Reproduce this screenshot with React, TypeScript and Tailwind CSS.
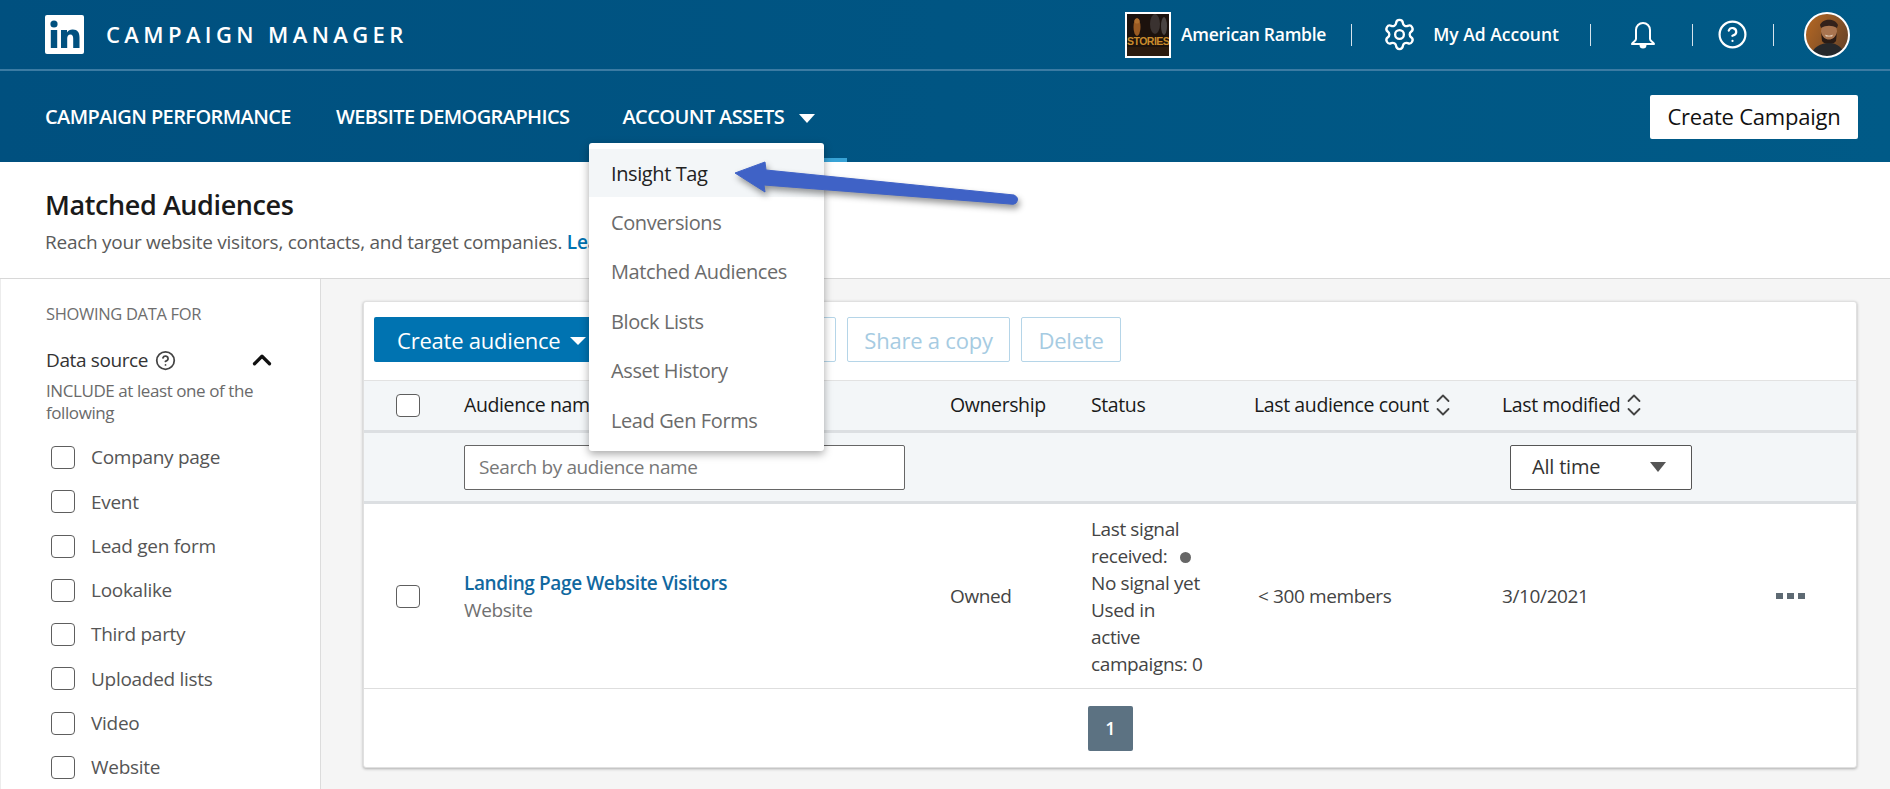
import { Settings, CircleHelp, ChevronUp } from "lucide-react";

const sources = ["Company page", "Event", "Lead gen form", "Lookalike", "Third party", "Uploaded lists", "Video", "Website"];
const menu = ["Insight Tag", "Conversions", "Matched Audiences", "Block Lists", "Asset History", "Lead Gen Forms"];

function Box() {
  return <span className="block w-[24px] h-[23px] rounded-[4px] border border-[#5e5e5e] bg-white shrink-0" />;
}

function Sep() {
  return <span className="block w-px h-[22px] bg-[#d5e3ec]" />;
}

function Sort() {
  return (
    <svg viewBox="0 0 16 24" className="w-[16px] h-[24px] shrink-0" fill="none" stroke="#444" strokeWidth="1.8" strokeLinecap="round" strokeLinejoin="round">
      <path d="M2.5 8 L8 2.5 L13.5 8" />
      <path d="M2.5 16 L8 21.5 L13.5 16" />
    </svg>
  );
}

function Stories() {
  return (
    <span className="relative block w-[46px] h-[46px] border-2 border-white bg-[#1a0f0a] overflow-hidden shrink-0">
      <svg viewBox="0 0 42 42" className="absolute inset-0 w-full h-full">
        <rect width="42" height="42" fill="#1c120d" />
        <ellipse cx="10" cy="13" rx="3.5" ry="9" fill="#9a5a22" />
        <circle cx="10" cy="7" r="2.6" fill="#b06f2e" />
        <ellipse cx="28" cy="10" rx="5" ry="10" fill="#3a3230" />
        <ellipse cx="37" cy="12" rx="3" ry="9" fill="#4a4442" />
        <rect x="0" y="33" width="42" height="9" fill="#2a1a0e" />
      </svg>
      <span className="absolute left-0 right-0 top-[21px] text-center font-['Liberation_Sans',sans-serif] text-[10.5px] leading-[12px] font-bold text-[#c98b2c] tracking-[-0.5px]">STORIES</span>
    </span>
  );
}

function Avatar() {
  return (
    <svg viewBox="0 0 46 46" className="w-[46px] h-[46px] shrink-0">
      <defs>
        <clipPath id="av"><circle cx="23" cy="23" r="21.5" /></clipPath>
        <linearGradient id="avbg" x1="0" y1="0" x2="1" y2="0.5">
          <stop offset="0" stopColor="#bb6a22" />
          <stop offset="1" stopColor="#6d4628" />
        </linearGradient>
      </defs>
      <g clipPath="url(#av)">
        <rect width="46" height="46" fill="url(#avbg)" />
        <ellipse cx="25" cy="19" rx="8" ry="10" fill="#a9744f" />
        <path d="M16 13c3-7 15-7 18 0l-1 3c-5-3-11-3-16 0z" fill="#33211a" />
        <path d="M17 20c2 10 14 10 16 0l-1 9c-2 4-12 4-14 0z" fill="#2a1b14" />
        <path d="M21 22.5c2 1.5 6 1.5 8 0l-1 2h-6z" fill="#e9d6c4" />
        <path d="M6 46c2-11 11-15 19-15s15 5 17 15z" fill="#26282b" />
      </g>
      <circle cx="23" cy="23" r="22" fill="none" stroke="#fff" strokeWidth="2" />
    </svg>
  );
}

export default function App() {
  return (
    <div className="relative w-[1890px] h-[789px] overflow-hidden bg-[#f5f5f5] font-['Open_Sans',sans-serif] text-[#1c1c1c]">
      <header className="h-[162px] bg-gradient-to-r from-[#00507f] to-[#005a87] text-white">
        <div className="h-[71px] border-b-2 border-[#3b7ba3] flex items-center pl-[45px] pr-[40px]">
          <svg viewBox="0 0 39 39" className="w-[39px] h-[39px] shrink-0">
            <rect width="39" height="39" rx="2" fill="#fff" />
            <circle cx="9" cy="9" r="3.6" fill="#00507f" />
            <rect x="5.8" y="15" width="6.4" height="18" fill="#00507f" />
            <path d="M16 15h6v2.6c1-1.7 3-3 5.7-3 5 0 6.8 3 6.8 8V33h-6.3v-9.2c0-2.6-.7-4.2-2.8-4.2-2.3 0-3.2 1.8-3.2 4.2V33H16z" fill="#00507f" />
          </svg>
          <span className="ml-[22px] text-[22px] font-semibold tracking-[0.2em] whitespace-nowrap">CAMPAIGN MANAGER</span>
          <div className="ml-auto flex items-center">
            <Stories />
            <span className="ml-[10px] text-[17.5px] font-semibold tracking-[-0.015em] whitespace-nowrap">American Ramble</span>
            <span className="ml-[25px]"><Sep /></span>
            <Settings className="ml-[30px] w-[35px] h-[35px]" strokeWidth={1.6} />
            <span className="ml-[16px] text-[17.5px] font-semibold whitespace-nowrap">My Ad Account</span>
            <span className="ml-[31px]"><Sep /></span>
            <svg viewBox="0 0 28 28" className="ml-[38px] w-[28px] h-[28px]" fill="none" stroke="#fff" strokeWidth="2" strokeLinejoin="round">
              <path d="M14 2a7 7 0 0 0-7 7v9c0 2-3 3-4 5h22c-1-2-4-3-4-5V9a7 7 0 0 0-7-7z" />
              <path d="M11.5 24a2.5 2.5 0 0 0 5 0z" fill="#fff" />
            </svg>
            <span className="ml-[35px]"><Sep /></span>
            <CircleHelp className="ml-[24px] w-[31px] h-[31px]" strokeWidth={1.7} />
            <span className="ml-[25px]"><Sep /></span>
            <span className="ml-[30px]"><Avatar /></span>
          </div>
        </div>
        <nav className="relative h-[91px] flex items-center pl-[45px] pr-[32px]">
          <span className="text-[20px] font-semibold tracking-[-0.03em] whitespace-nowrap">CAMPAIGN PERFORMANCE</span>
          <span className="ml-[45px] text-[20px] font-semibold tracking-[-0.03em] whitespace-nowrap">WEBSITE DEMOGRAPHICS</span>
          <span className="ml-[53px] text-[20px] font-semibold tracking-[-0.03em] whitespace-nowrap">ACCOUNT ASSETS</span>
          <span className="ml-[15px] w-0 h-0 border-x-[8px] border-x-transparent border-t-[9px] border-t-white mt-[3px]" />
          <button className="ml-auto h-[44px] w-[208px] bg-white rounded-[2px] text-[#111] text-[22px] font-medium tracking-[-0.01em]">Create Campaign</button>
          <span className="absolute left-[589px] top-[87px] w-[258px] h-[4px] bg-[#38a3d6]" />
        </nav>
      </header>

      <section className="h-[117px] bg-white border-b border-[#d8d8d8] pl-[45px] pt-[24px]">
        <h1 className="text-[27px] leading-[38px] font-semibold tracking-[-0.015em] text-[#1a1a1a]">Matched Audiences</h1>
        <p className="mt-[5px] w-[544px] overflow-hidden text-[19px] leading-[26px] tracking-[-0.0135em] text-[#5a5a5a] whitespace-nowrap">
          Reach your website visitors, contacts, and target companies. <span className="text-[#0073b1] font-semibold">Learn more</span>
        </p>
      </section>

      <main className="flex h-[510px]">
        <aside className="w-[321px] shrink-0 bg-white border-l border-l-[#ececec] border-r border-r-[#dcdcdc] pl-[45px] pt-[24px]">
          <p className="text-[16.5px] leading-[22px] tracking-[-0.02em] text-[#6e6e6e] whitespace-nowrap">SHOWING DATA FOR</p>
          <div className="mt-[23px] flex items-center h-[24px]">
            <span className="text-[19px] tracking-[-0.02em] text-[#333] whitespace-nowrap">Data source</span>
            <CircleHelp className="ml-[7px] w-[21px] h-[21px] text-[#444]" strokeWidth={2} />
            <ChevronUp className="ml-[71px] w-[30px] h-[30px] text-[#111]" strokeWidth={2.6} />
          </div>
          <p className="mt-[8px] w-[250px] text-[17px] leading-[22px] tracking-[-0.025em] text-[#6a6a6a]">INCLUDE at least one of the following</p>
          <ul className="mt-[22px] flex flex-col gap-[21.3px]">
            {sources.map((s) => (
              <li key={s} className="flex items-center h-[23px] pl-[5px] gap-[16px] text-[19px] tracking-[-0.015em] text-[#555]">
                <Box />
                <span className="whitespace-nowrap">{s}</span>
              </li>
            ))}
          </ul>
        </aside>

        <div className="flex-1 pl-[42px] pr-[33px] pt-[22px]">
          <div className="h-[467px] bg-white rounded-[3px] border border-[#e0e0e0] shadow-[0_1px_3px_rgba(0,0,0,0.3)] flex flex-col">
            <div className="h-[78px] flex items-start pl-[10px] pt-[15px] gap-[11px] shrink-0">
              <button className="h-[45px] w-[240px] pl-[23px] pt-[2px] bg-[#0073b1] rounded-[2px] text-white text-[22px] font-medium tracking-[-0.01em] flex items-center gap-[9px] whitespace-nowrap">
                Create audience
                <span className="w-0 h-0 border-x-[8px] border-x-transparent border-t-[8px] border-t-white" />
              </button>
              <button className="h-[45px] w-[211px] border border-[#b5d5e8] rounded-[2px]" />
              <button className="h-[45px] w-[163px] pt-[2px] border border-[#b5d5e8] rounded-[2px] text-[#a6cbe2] text-[22px] font-medium tracking-[-0.01em] whitespace-nowrap">Share a copy</button>
              <button className="h-[45px] w-[100px] pt-[2px] border border-[#b5d5e8] rounded-[2px] text-[#a6cbe2] text-[22px] font-medium tracking-[-0.01em]">Delete</button>
            </div>

            <div className="h-[53px] shrink-0 bg-[#f3f6f8] border-t border-[#e2e2e2] border-b-[3px] border-b-[#dcdfe2] pb-[2px] grid grid-cols-[100px_486px_141px_163px_248px_1fr] items-center text-[19.5px] font-medium tracking-[-0.02em] text-[#1a1a1a]">
              <span className="pl-[32px] pt-[2px]"><Box /></span>
              <span className="whitespace-nowrap">Audience name</span>
              <span>Ownership</span>
              <span>Status</span>
              <span className="flex items-center gap-[6px] whitespace-nowrap">Last audience count <Sort /></span>
              <span className="flex items-center gap-[6px] whitespace-nowrap">Last modified <Sort /></span>
            </div>

            <div className="h-[71px] shrink-0 bg-[#f3f6f8] border-b-[3px] border-b-[#dcdfe2] grid grid-cols-[100px_1046px_1fr] items-center">
              <span />
              <div className="w-[441px] h-[45px] bg-white border border-[#666] rounded-[2px] pl-[14px] flex items-center text-[19px] tracking-[-0.02em] text-[#777] whitespace-nowrap">Search by audience name</div>
              <div className="w-[182px] h-[45px] bg-white border border-[#555] rounded-[2px] pl-[21px] pr-[25px] flex items-center justify-between text-[20px] tracking-[-0.01em] text-[#333]">
                All time
                <span className="w-0 h-0 border-x-[8px] border-x-transparent border-t-[10px] border-t-[#555]" />
              </div>
            </div>

            <div className="h-[185px] shrink-0 border-b border-[#dedede] grid grid-cols-[100px_486px_141px_163px_248px_1fr_auto] items-center text-[19px] tracking-[-0.02em] text-[#444]">
              <span className="pl-[32px]"><Box /></span>
              <div className="leading-[27px] pt-[1px]">
                <p className="text-[#11689f] font-semibold whitespace-nowrap">Landing Page Website Visitors</p>
                <p className="text-[#707070]">Website</p>
              </div>
              <span>Owned</span>
              <div className="leading-[27px] w-[130px] pt-[2px] whitespace-nowrap">
                Last signal
                <br />
                received: <span className="inline-block ml-[8px] w-[11px] h-[11px] rounded-full bg-[#666]" />
                <br />
                No signal yet
                <br />
                Used in
                <br />
                active
                <br />
                campaigns: 0
              </div>
              <span className="pl-[4px] whitespace-nowrap">&lt; 300 members</span>
              <span>3/10/2021</span>
              <span className="flex gap-[4px] pr-[51px]">
                <i className="block w-[7px] h-[6px] bg-[#5e6a73]" />
                <i className="block w-[7px] h-[6px] bg-[#5e6a73]" />
                <i className="block w-[7px] h-[6px] bg-[#5e6a73]" />
              </span>
            </div>

            <div className="flex-1 flex justify-center pt-[17px] pl-[1px]">
              <span className="w-[45px] h-[45px] bg-[#5c7282] rounded-[2px] text-white font-semibold text-[18px] flex items-center justify-center">1</span>
            </div>
          </div>
        </div>
      </main>

      <div className="absolute left-[589px] top-[143px] w-[235px] h-[308px] bg-white rounded-[3px] shadow-[0_3px_8px_rgba(0,0,0,0.35)] pt-[6px]">
        {menu.map((m, i) => (
          <div key={m} className={i === 0 ? "h-[48px] pl-[22px] pt-[2px] flex items-center bg-[#f3f6f8] text-[20px] font-medium tracking-[-0.02em] text-[#222]" : "h-[49.5px] pl-[22px] pt-[2px] flex items-center text-[20px] font-medium tracking-[-0.02em] text-[#6b6b6b]"}>
            {m}
          </div>
        ))}
      </div>

      <svg viewBox="0 0 295 50" className="absolute left-[730px] top-[158px] w-[295px] h-[50px] drop-shadow-[2px_4px_3px_rgba(0,0,0,0.4)]">
        <path d="M5 15 L35 4 L36 12 L284 37 Q290 40 286 45 Q284 47 280 46 L34 27 L35 34 Z" fill="#3f62c6" stroke="#3f62c6" strokeLinejoin="round" strokeWidth="1" />
      </svg>
    </div>
  );
}
